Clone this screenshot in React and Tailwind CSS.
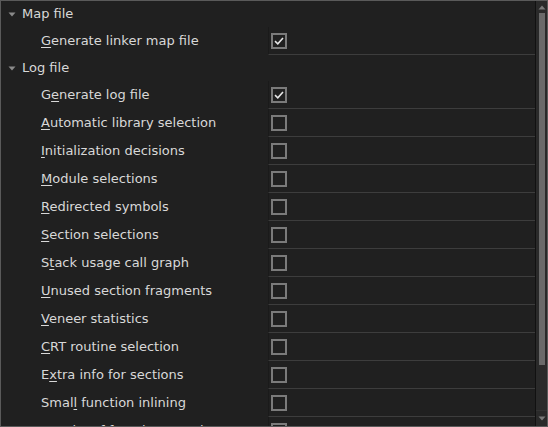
import React from "react";

const rows1 = [{ pre: "", u: "G", post: "enerate linker map file", checked: true }];
const rows2 = [
  { pre: "G", u: "e", post: "nerate log file", checked: true },
  { pre: "", u: "A", post: "utomatic library selection" },
  { pre: "", u: "I", post: "nitialization decisions" },
  { pre: "", u: "M", post: "odule selections" },
  { pre: "", u: "R", post: "edirected symbols" },
  { pre: "", u: "S", post: "ection selections" },
  { pre: "S", u: "t", post: "ack usage call graph" },
  { pre: "", u: "U", post: "nused section fragments" },
  { pre: "", u: "V", post: "eneer statistics" },
  { pre: "", u: "C", post: "RT routine selection" },
  { pre: "E", u: "x", post: "tra info for sections" },
  { pre: "Smal", u: "l", post: " function inlining" },
  { pre: "", u: "R", post: "esults of function merging" },
];

function Caret() {
  return (
    <svg width="8" height="5" viewBox="0 0 8 5" className="ml-[7px] mr-[6px]">
      <path d="M0.5 0.5 L7.5 0.5 L4 4.5 Z" fill="#8a8a8a" />
    </svg>
  );
}

function Check({ checked }) {
  return (
    <div className="w-[16px] h-[16px] border-2 border-[#7b7b7b] flex items-center justify-center">
      {checked && (
        <svg width="10" height="8" viewBox="0 0 10 8">
          <path d="M1 4.2 L3.8 6.8 L9 1" stroke="#e6e6e6" strokeWidth="1.6" fill="none" />
        </svg>
      )}
    </div>
  );
}

function Header({ label }) {
  return (
    <div className="h-[26px] shrink-0 flex items-center">
      <Caret />
      <span>{label}</span>
    </div>
  );
}

function Row({ r }) {
  return (
    <div className="flex h-[28px] shrink-0">
      <div className="w-[267px] pl-[40px] flex items-center whitespace-nowrap">
        <span>
          {r.pre}
          <span className="underline underline-offset-2">{r.u}</span>
          {r.post}
        </span>
      </div>
      <div className="flex-1 border-l border-[#1a1a1a] border-b border-b-[#3d3d3d] pl-[2px] flex items-center">
        <Check checked={r.checked} />
      </div>
    </div>
  );
}

export default function App() {
  return (
    <div
      className="w-[548px] h-[427px] border border-[#5a5a5a] bg-[#202020] text-[#d8d8d8] text-[13px] flex overflow-hidden"
      style={{ fontFamily: '"DejaVu Sans", Verdana, sans-serif' }}
    >
      <div className="flex-1 flex flex-col overflow-hidden">
        <Header label="Map file" />
        {rows1.map((r, i) => (
          <Row key={i} r={r} />
        ))}
        <Header label="Log file" />
        {rows2.map((r, i) => (
          <Row key={i} r={r} />
        ))}
      </div>
      <div className="w-[12px] border-l border-[#111111] bg-[#2a2a2a] flex flex-col items-center">
        <div className="h-[12px] shrink-0 flex items-center justify-center">
          <svg width="8" height="5" viewBox="0 0 8 5">
            <path d="M0.5 4.5 L7.5 4.5 L4 0.5 Z" fill="#7a7a7a" />
          </svg>
        </div>
        <div className="w-[6px] h-[352px] shrink-0 bg-[#6a6a6a]" />
        <div className="flex-1" />
        <div className="h-[16px] shrink-0 w-full border-t border-[#333] flex items-center justify-center">
          <svg width="8" height="5" viewBox="0 0 8 5">
            <path d="M0.5 0.5 L7.5 0.5 L4 4.5 Z" fill="#7a7a7a" />
          </svg>
        </div>
      </div>
    </div>
  );
}
